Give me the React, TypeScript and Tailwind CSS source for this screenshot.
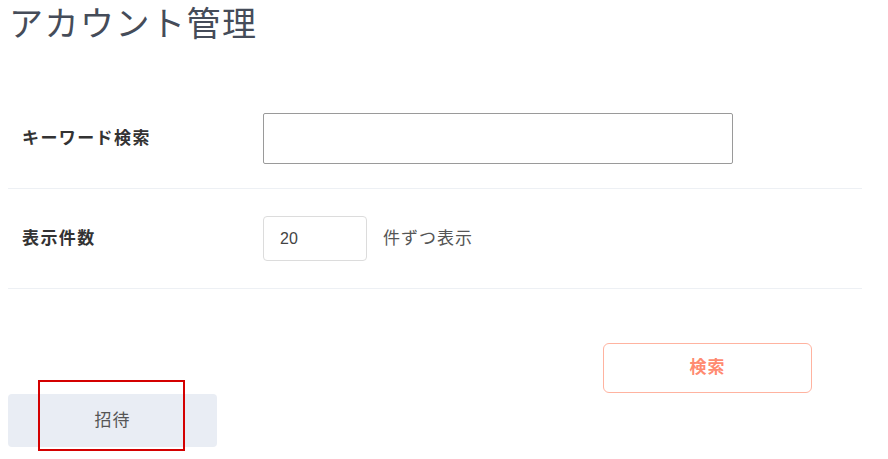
// Account management page - search form and invite button

const font = "font-['Liberation_Sans','Noto_Sans_CJK_JP',sans-serif]";

export default function App() {
  return (
    <div className={`relative w-[888px] h-[459px] bg-white overflow-hidden ${font}`}>
      {/* Title */}
      <h1 className="pl-[9px] pt-[2px] text-[34px] leading-[44px] font-normal tracking-[1.5px] text-[#454c59]">
        アカウント管理
      </h1>

      {/* Search form */}
      <div className="mt-[43px] ml-[8px] w-[854px]">
        <div className="flex items-center h-[100px] border-b border-[#edf0f4]">
          <div className="w-[255px] pl-[14px] text-[17px] font-bold tracking-[1.4px] text-[#333]">キーワード検索</div>
          <input
            type="text"
            className="w-[470px] h-[51px] border-[1.5px] border-[#9a9a9a] rounded-[2px] px-3 outline-none"
          />
        </div>
        <div className="flex items-center h-[100px] border-b border-[#edf0f4]">
          <div className="w-[255px] pl-[14px] text-[17px] font-bold tracking-[1.4px] text-[#333]">表示件数</div>
          <input
            type="text"
            defaultValue="20"
            className="w-[104px] h-[45px] border border-[#dcdcdc] rounded-[4px] pl-[16px] text-[16px] text-[#444] outline-none"
          />
          <span className="ml-[16px] text-[17px] tracking-[1px] text-[#555]">件ずつ表示</span>
        </div>

        <div className="flex justify-end pr-[50px] pt-[54px]">
          <button className="w-[209px] h-[50px] border-[1.5px] border-[#ffb3a0] rounded-[6px] bg-white text-[17px] font-bold tracking-[1px] text-[#ff8a70]">
            検索
          </button>
        </div>
      </div>

      {/* Invite */}
      <div className="ml-[8px] mt-[1px]">
        <button className="w-[209px] h-[53px] rounded-[4px] bg-[#e9edf4] text-[17px] tracking-[1px] text-[#555]">
          招待
        </button>
      </div>

      {/* Highlight annotation */}
      <div className="absolute left-[38px] top-[380px] w-[147px] h-[71px] border-2 border-[#d40000] pointer-events-none" />
    </div>
  );
}
